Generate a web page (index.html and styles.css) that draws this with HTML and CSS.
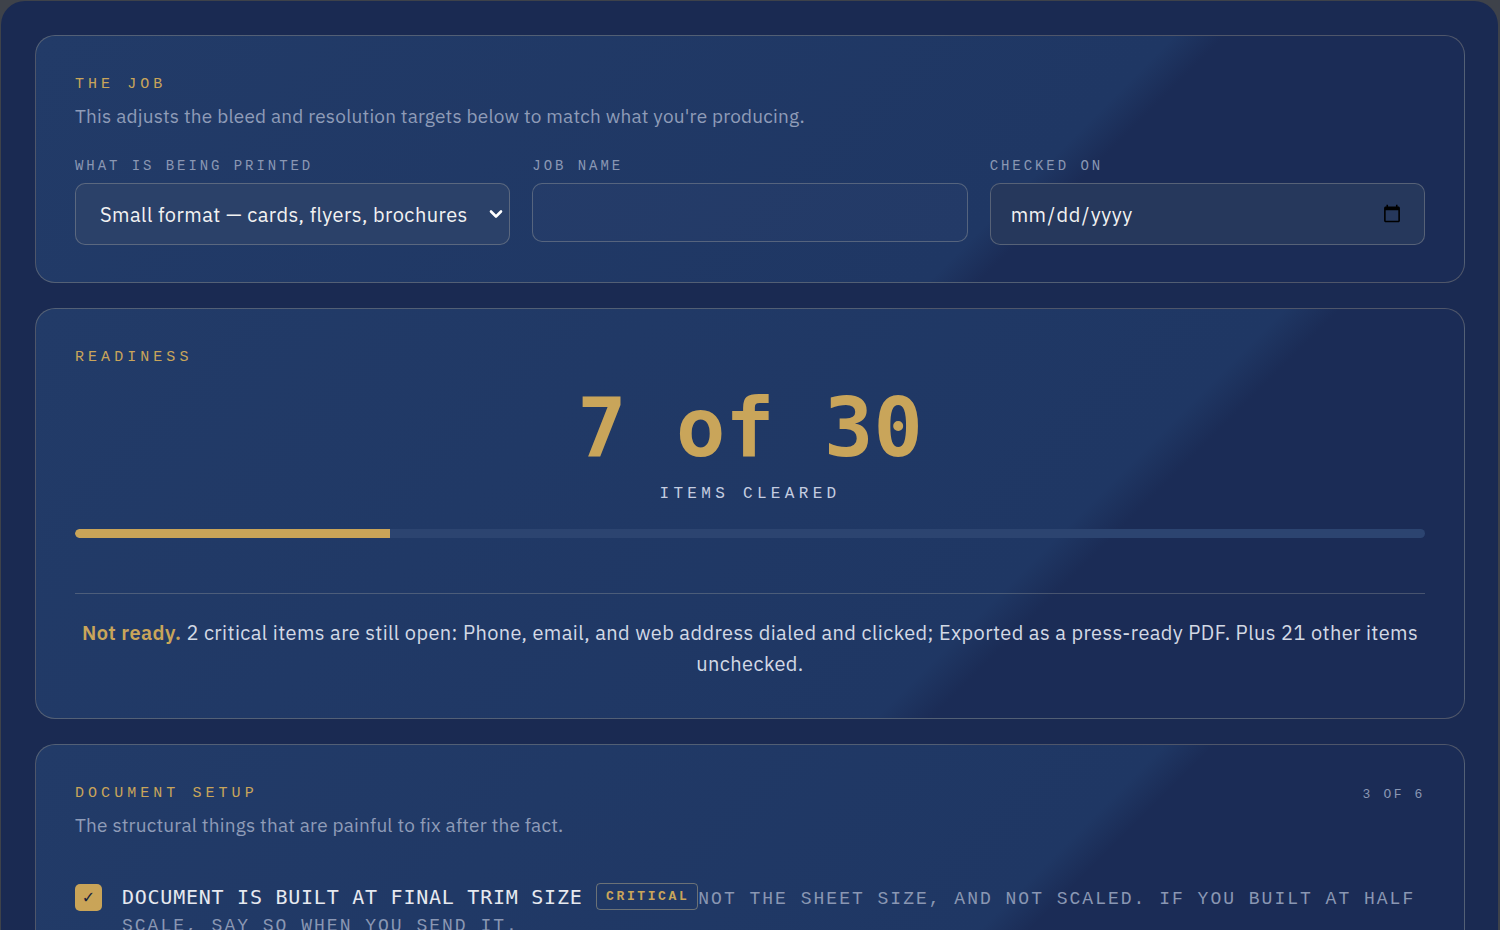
FILE: index.html
```html
<!DOCTYPE html>
<html lang="en">

<head>
  <meta charset="UTF-8">
  <meta name="viewport" content="width=device-width, initial-scale=1.0">
  <title>Print preflight</title>
  <link rel="stylesheet" href="styles.css">
</head>

<body>
  <div class="shell">

    <!-- job settings -->
    <section class="card">
      <h2 class="eyebrow">The job</h2>
      <p class="lede">This adjusts the bleed and resolution targets below to match what you're producing.</p>
      <div class="fields">
        <label class="field">
          <span class="field-label">What is being printed</span>
          <span class="select-wrap">
            <select class="control control-select">
              <option>Small format — cards, flyers, brochures</option>
              <option>Large format — posters, banners</option>
              <option>Packaging</option>
            </select>
            <svg class="select-arrow" width="14" height="10" viewBox="0 0 14 10">
              <path d="M2 2.5 L7 7.5 L12 2.5" fill="none" stroke="#ffffff" stroke-width="2.6" stroke-linecap="round" stroke-linejoin="round"/>
            </svg>
          </span>
        </label>
        <label class="field">
          <span class="field-label">Job name</span>
          <input type="text" class="control control-text">
        </label>
        <label class="field">
          <span class="field-label">Checked on</span>
          <input type="date" class="control control-date">
        </label>
      </div>
    </section>

    <!-- score -->
    <section class="card card-score">
      <h2 class="eyebrow">Readiness</h2>
      <div class="score">7 of 30</div>
      <div class="score-sub">Items cleared</div>
      <div class="bar">
        <div class="bar-fill" style="width: 23.33%;"></div>
      </div>
      <p class="verdict"><strong>Not ready.</strong> 2 critical items are still open: Phone, email, and web address dialed and clicked; Exported as a press-ready PDF. Plus 21 other items unchecked.</p>
    </section>

    <!-- checklist group -->
    <section class="card">
      <div class="section-head">
        <h2 class="eyebrow">Document setup</h2>
        <span class="count">3 of 6</span>
      </div>
      <p class="lede">The structural things that are painful to fix after the fact.</p>
      <ul class="checklist">
        <li class="check-item">
          <span class="box is-checked">&#10003;</span>
          <div class="check-text">
            <span class="check-title">Document is built at final trim size</span>
            <span class="badge">Critical</span><span class="check-note">Not the sheet size, and not scaled. If you built at half scale, say so when you send it.</span>
          </div>
        </li>
      </ul>
    </section>

  </div>
</body>

</html>
```

FILE: styles.css
```css
/* 预检清单页面 */

body {
  margin: 0;
  padding: 1px 2px 0 1px;
  background: #3e424a;
  font-family: "IBM Plex Sans", Inter, "Noto Sans", sans-serif;
  color: #d3d9e5;
}

.shell {
  background: #1a2a52;
  border-radius: 24px;
  padding: 34px 33px 40px 34px;
  display: flex;
  flex-direction: column;
  gap: 25px;
  min-height: 900px;
}

.card {
  border: 1px solid rgba(190, 178, 150, 0.32);
  border-radius: 20px;
  padding: 40px 39px 37px;
  background: linear-gradient(135deg, #223b68 0%, #1f3764 68%, #1b2c56 71%, #1b2c56 100%);
}

.card-score {
  padding-bottom: 39px;
}

.eyebrow {
  margin: 0;
  font-family: "Liberation Mono", "DejaVu Sans Mono", monospace;
  font-weight: normal;
  font-size: 15px;
  line-height: 18px;
  letter-spacing: 0.27em;
  text-transform: uppercase;
  color: #c9a55a;
}

.lede {
  margin: 8px 0 0;
  font-size: 19px;
  line-height: 28px;
  letter-spacing: 0.2px;
  color: #8f9cb8;
}

/* 表单 */

.fields {
  display: grid;
  grid-template-columns: repeat(3, 1fr);
  gap: 22px;
  margin-top: 27px;
  align-items: start;
}

.field {
  display: flex;
  flex-direction: column;
  gap: 8px;
}

.field-label {
  font-family: "Liberation Mono", "DejaVu Sans Mono", monospace;
  font-size: 14px;
  line-height: 18px;
  letter-spacing: 0.21em;
  text-transform: uppercase;
  color: #8a97b3;
}

.control {
  box-sizing: border-box;
  width: 100%;
  height: 62px;
  border: 1px solid rgba(180, 178, 170, 0.35);
  border-radius: 10px;
  padding: 0 20px;
  font-family: "IBM Plex Sans", Inter, "Noto Sans", sans-serif;
  font-size: 20px;
  letter-spacing: 0.45px;
  color: #f2f2f2;
  outline: none;
}

.select-wrap {
  position: relative;
  display: block;
}

.control-select {
  display: block;
  appearance: none;
  -webkit-appearance: none;
  background-color: #2b4169;
  padding-left: 24px;
}

/* 下拉箭头 */
.select-arrow {
  position: absolute;
  right: 7px;
  top: 26px;
  pointer-events: none;
}

.control-text {
  height: 59px;
  background: rgba(255, 255, 255, 0.02);
}

.control-date {
  background: #26385c;
  padding-left: 19px;
}

/* 得分 */

.score {
  margin-top: 19px;
  text-align: center;
  font-family: "DejaVu Sans Mono", monospace;
  font-weight: bold;
  font-size: 82px;
  line-height: 84px;
  color: #c9a55a;
}

.score-sub {
  margin-top: 14px;
  text-align: center;
  font-family: "Liberation Mono", "DejaVu Sans Mono", monospace;
  font-size: 16px;
  line-height: 20px;
  letter-spacing: 0.27em;
  text-transform: uppercase;
  color: #c5cde0;
}

.bar {
  margin-top: 25px;
  height: 9px;
  border-radius: 5px;
  background: #2c4470;
  overflow: hidden;
}

.bar-fill {
  height: 100%;
  background: #c9a458;
  border-radius: 5px 0 0 5px;
}

.verdict {
  margin: 55px 0 0;
  padding-top: 23px;
  border-top: 1px solid rgba(180, 178, 170, 0.3);
  text-align: center;
  font-size: 20px;
  line-height: 31px;
  letter-spacing: 0.4px;
  color: #d3d9e5;
}

.verdict strong {
  color: #c9a55a;
  font-weight: 600;
}

/* 清单 */

.section-head {
  display: flex;
  justify-content: space-between;
  align-items: center;
}

.count {
  font-family: "Liberation Mono", "DejaVu Sans Mono", monospace;
  font-size: 13px;
  letter-spacing: 0.2em;
  text-transform: uppercase;
  color: #8a97b3;
}

.checklist {
  list-style: none;
  margin: 44px 0 0;
  padding: 0;
}

.check-item {
  display: flex;
  gap: 20px;
  align-items: flex-start;
}

.box {
  flex: none;
  width: 27px;
  height: 27px;
  margin-top: 1px;
  border-radius: 5px;
  display: flex;
  align-items: center;
  justify-content: center;
  font-family: "DejaVu Sans", sans-serif;
  font-size: 16px;
  color: #16213d;
}

.box.is-checked {
  background: #c9a458;
}

.check-text {
  flex: 1;
  font-family: "Liberation Mono", "DejaVu Sans Mono", monospace;
  line-height: 26px;
  text-transform: uppercase;
}

.check-title {
  font-family: "DejaVu Sans Mono", monospace;
  font-size: 20px;
  letter-spacing: 0.75px;
  color: #e6e9f0;
}

.badge {
  display: inline-block;
  margin-left: 4px;
  padding: 0 8px 0 9px;
  border: 1px solid rgba(200, 185, 140, 0.45);
  border-radius: 4px;
  font-size: 13px;
  font-weight: bold;
  line-height: 25px;
  letter-spacing: 0.2em;
  color: #c9a55a;
  vertical-align: 4px;
}

.check-note {
  font-size: 18px;
  letter-spacing: 2px;
  color: #8a97b3;
}
```
